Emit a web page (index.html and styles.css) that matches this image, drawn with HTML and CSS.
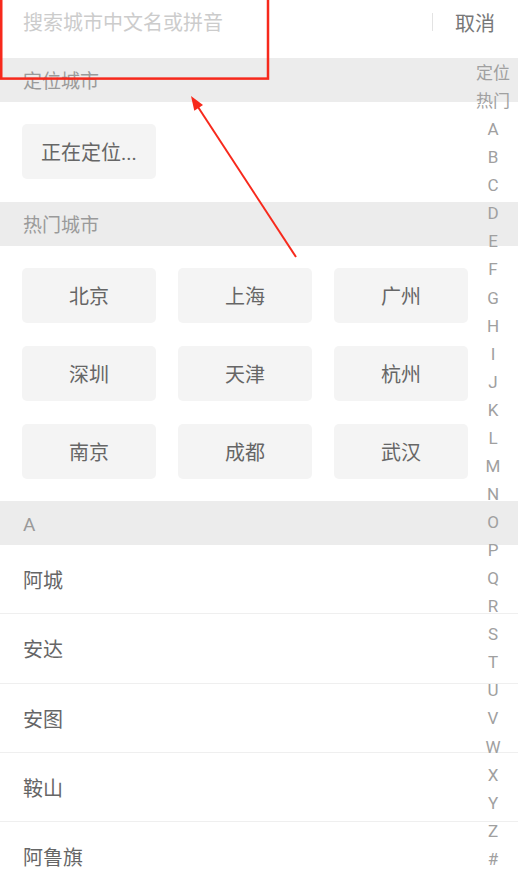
FILE: index.html
```html
<!DOCTYPE html>
<html lang="zh-CN">

<head>
    <meta charset="UTF-8">
    <meta name="viewport" content="width=device-width, initial-scale=1.0">
    <title>选择城市</title>
    <link rel="stylesheet" href="styles.css">
</head>

<body>
    <div class="page">
        <!-- Search -->
        <div class="search-bar">
            <input type="text" class="search-input" placeholder="搜索城市中文名或拼音" />
            <span class="search-divider"></span>
            <span class="cancel">取消</span>
        </div>

        <!-- Current location -->
        <div class="section-title">定位城市</div>
        <div class="city-grid location">
            <div class="city-btn">正在定位...</div>
        </div>

        <!-- Hot cities -->
        <div class="section-title">热门城市</div>
        <div class="city-grid">
            <div class="city-btn">北京</div>
            <div class="city-btn">上海</div>
            <div class="city-btn">广州</div>
            <div class="city-btn">深圳</div>
            <div class="city-btn">天津</div>
            <div class="city-btn">杭州</div>
            <div class="city-btn">南京</div>
            <div class="city-btn">成都</div>
            <div class="city-btn">武汉</div>
        </div>

        <!-- City list -->
        <div class="section-title">A</div>
        <ul class="city-list">
            <li>阿城</li>
            <li>安达</li>
            <li>安图</li>
            <li>鞍山</li>
            <li>阿鲁旗</li>
            <li>安康</li>
        </ul>

        <!-- Letter index -->
        <ul class="index-bar">
            <li>定位</li>
            <li>热门</li>
            <li>A</li><li>B</li><li>C</li><li>D</li><li>E</li><li>F</li><li>G</li>
            <li>H</li><li>I</li><li>J</li><li>K</li><li>L</li><li>M</li><li>N</li>
            <li>O</li><li>P</li><li>Q</li><li>R</li><li>S</li><li>T</li><li>U</li>
            <li>V</li><li>W</li><li>X</li><li>Y</li><li>Z</li><li>#</li>
        </ul>

        <!-- Annotation -->
        <svg class="annotation" width="518" height="300" viewBox="0 0 518 300">
            <rect x="1.25" y="-6" width="266.75" height="84.6" fill="none" stroke="#f7291c" stroke-width="2.5" />
            <line x1="296" y1="257" x2="198" y2="107" stroke="#f7291c" stroke-width="2" />
            <polygon points="191,96 203,105 194.3,110.8" fill="#f7291c" />
        </svg>
    </div>
</body>

</html>
```

FILE: styles.css
```css
body {
    margin: 0;
    padding: 0;
    background-color: #ffffff;
    font-family: Roboto, "Noto Sans CJK SC", sans-serif;
}

.page {
    position: relative;
    width: 518px;
    overflow: hidden;
}

.search-bar {
    display: flex;
    align-items: center;
    height: 44px;
    padding: 0 23px 14px 23px;
}

.search-input {
    flex: 1;
    border: none;
    outline: none;
    padding: 2px 0 0 0;
    font-family: inherit;
    font-size: 20px;
    color: #666666;
    background: transparent;
}

.search-input::placeholder {
    color: #cccccc;
}

.search-divider {
    width: 1px;
    height: 18px;
    background: #e3e3e3;
    margin-right: 22px;
}

.cancel {
    font-size: 20px;
    color: #777777;
}

.section-title {
    height: 40px;
    line-height: 40px;
    padding: 4px 0 0 23px;
    background: #ececec;
    font-size: 19px;
    color: #9a9a9a;
}

.city-grid {
    display: grid;
    grid-template-columns: repeat(3, 134px);
    column-gap: 22px;
    row-gap: 23px;
    padding: 22px 50px 22px 22px;
}

.city-grid.location {
    padding-bottom: 23px;
}

.city-btn {
    height: 51px;
    line-height: 51px;
    padding-top: 4px;
    text-align: center;
    background: #f4f4f4;
    border-radius: 5px;
    font-size: 20px;
    color: #666666;
}

.city-list {
    list-style: none;
    margin: 0;
    padding: 0;
}

.city-list li {
    height: 64.25px;
    line-height: 64.25px;
    padding: 4px 0 0 23px;
    border-bottom: 1px solid #efefef;
    font-size: 20px;
    color: #666666;
}

.index-bar {
    position: absolute;
    top: 59px;
    right: 0;
    width: 50px;
    margin: 0;
    padding: 0;
    list-style: none;
    text-align: center;
}

.index-bar li {
    height: 28.07px;
    line-height: 28.07px;
    font-size: 17px;
    color: #a0a0a0;
}

.annotation {
    position: absolute;
    top: 0;
    left: 0;
}
```
